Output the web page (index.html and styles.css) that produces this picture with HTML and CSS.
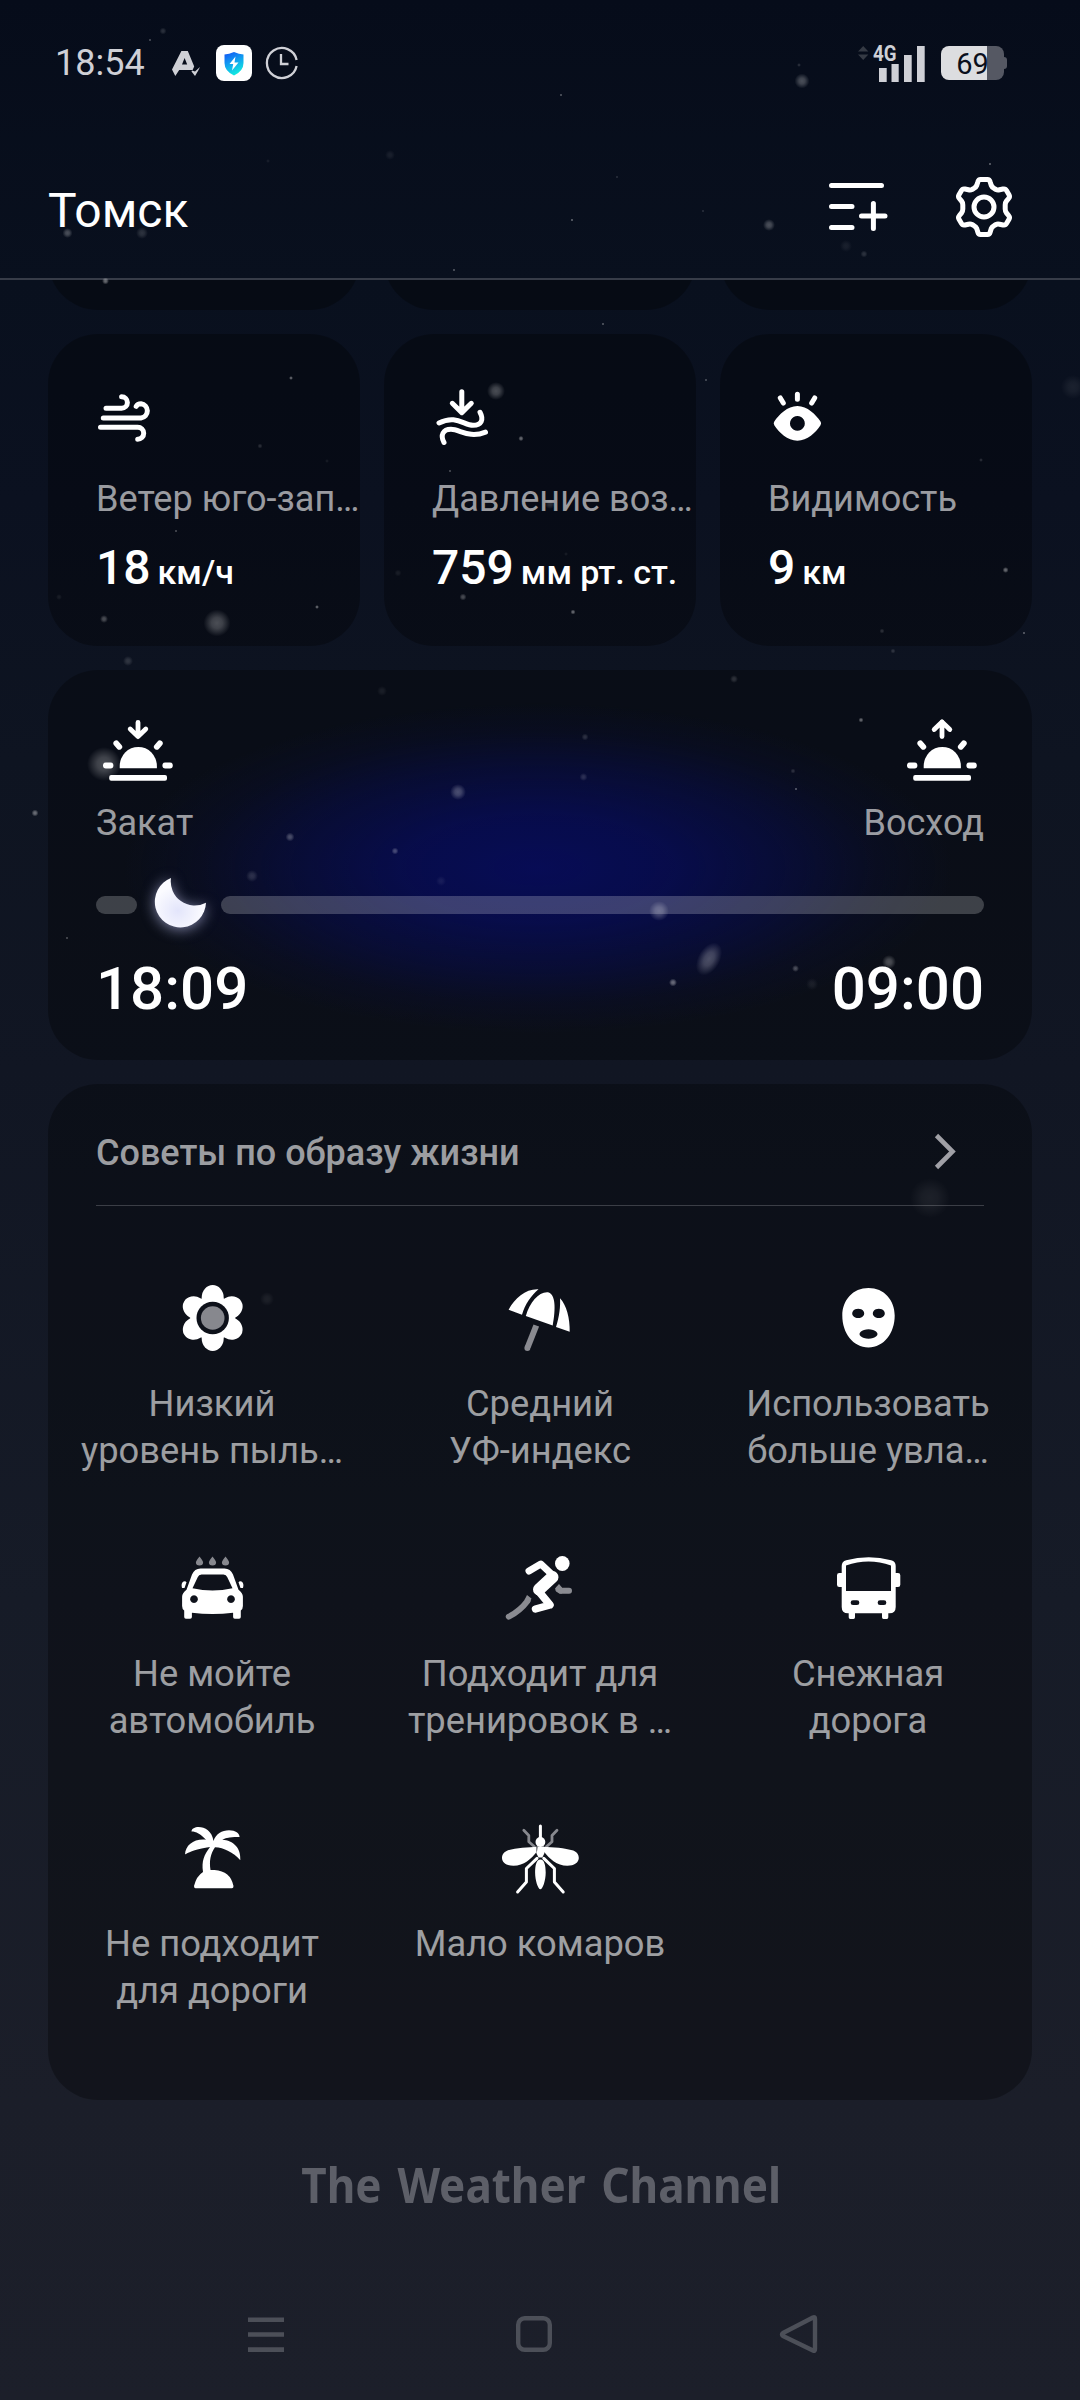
FILE: index.html
```html
<!DOCTYPE html>
<html lang="ru">
<head>
<meta charset="utf-8">
<title>Погода</title>
<link rel="stylesheet" href="styles.css">
</head>
<body>
<div class="screen">
  <header class="status">
    <span class="clock">18:54</span>
    <svg class="st-a" width="32" height="36" viewBox="0 0 32 36"><path fill="#cfd0d6" fill-rule="evenodd" d="M11.4 6h6.4l5.600 13.500.8 2-1.600 3.500H9.200L5.300 31 2 24.500zM14.600 13l-2.600 6.500h5.200z"/><path fill="#cfd0d6" d="M22 25.500l3 1 5-4.500-2 4-3 5-3.500-4.500z"/></svg>
    <span class="st-app"><svg width="36" height="36" viewBox="0 0 36 36"><defs><linearGradient id="sh" x1="0" y1="0" x2=".4" y2="1"><stop offset="0" stop-color="#1450f5"/><stop offset=".5" stop-color="#119cf0"/><stop offset="1" stop-color="#12e6e0"/></linearGradient></defs><path fill="url(#sh)" d="M8.500 9.500Q13 9 18 7q5 2 9.500 2.500V18q0 8-9.500 12.500Q8.500 26 8.500 18z"/><path fill="#fff" d="M19.500 11.500 13.500 19h3.700l-1.200 6.500 6.500-8h-4z"/></svg></span>
    <svg class="st-clock" width="34" height="34" viewBox="0 0 34 34" fill="none" stroke="#cfd0d6" stroke-width="2.300"><path d="M31.600 14A15 15 0 1 0 31.600 20"/><path d="M16 8v10h7.500"/></svg>
    <svg class="signal" width="70" height="38" viewBox="0 0 70 38" fill="#cfd0d6"><path fill="#353a44" d="M0 7.500 5.200 2l5.200 5.500zM0 10.500h10.400L5.200 16z"/><text x="15" y="16.500" font-size="21.500" font-weight="700" textLength="23.500" lengthAdjust="spacingAndGlyphs">4G</text><path d="M21 24h7.700v14H21zM33.500 20h7.200v18h-7.200zM46 11h7.700v27H46zM59 2h7.700v36H59z"/></svg>
    <span class="battery"><span>69</span></span>
  </header>

  <div class="topbar">
    <h1>Томск</h1>
    <svg class="add" width="64" height="60" viewBox="0 0 64 60" fill="none" stroke="#fff" stroke-width="5" stroke-linecap="round"><path d="M5.500 8.500h50M5.500 29.500h20.500M5.500 50.500h20.500M35.500 39h23.500M47.400 26.500v25"/></svg>
    <svg class="gear" width="60" height="64" viewBox="-30 -32 60 64" fill="none" stroke="#fff" stroke-width="5" stroke-linejoin="round"><circle r="10"/><path d="M-3.500 -27.500H3.500Q5.500 -27.500 6.200 -25L7.300 -21.500Q8 -19.700 10 -18.700L12 -17.500Q13.500 -16.700 15.500 -17.200L19 -18Q21.500 -18.500 22.500 -16.500L25 -12.300Q26.200 -10.200 24.500 -8.300L22.500 -6Q21.200 -4.500 21.200 -2V2Q21.200 4.500 22.500 6L24.500 8.300Q26.200 10.200 25 12.300L22.500 16.500Q21.500 18.500 19 18L15.500 17.200Q13.500 16.700 12 17.500L10 18.700Q8 19.700 7.300 21.500L6.200 25Q5.500 27.500 3.500 27.500H-3.500Q-5.500 27.500 -6.200 25L-7.300 21.500Q-8 19.700 -10 18.700L-12 17.500Q-13.500 16.700 -15.500 17.200L-19 18Q-21.500 18.500 -22.500 16.500L-25 12.300Q-26.200 10.200 -24.500 8.300L-22.500 6Q-21.200 4.500 -21.200 2V-2Q-21.200 -4.500 -22.500 -6L-24.500 -8.300Q-26.200 -10.200 -25 -12.300L-22.500 -16.500Q-21.500 -18.500 -19 -18L-15.500 -17.200Q-13.500 -16.700 -12 -17.500L-10 -18.700Q-8 -19.700 -7.300 -21.500L-6.200 -25Q-5.500 -27.500 -3.500 -27.500Z"/></svg>
  </div>

  <main class="content">
    <section class="metrics scrolled"><div class="card"></div><div class="card"></div><div class="card"></div></section>
    <section class="metrics">
      <article class="card metric">
        <svg width="60" height="72" viewBox="0 0 60 72" fill="none" stroke="#fff" stroke-width="5" stroke-linecap="round"><path d="M10 26.300H25.600a5.800 5.800 0 0 0 0-11.600M7.300 36H45a7.200 7.200 0 0 0 0-14.300q-3.500 0-4.800 2.600M4.500 45.300H41.700a6 6 0 0 1 0 12"/></svg>
        <p class="label">Ветер юго-зап…</p>
        <p class="value">18<small>км/ч</small></p>
      </article>
      <article class="card metric">
        <svg width="60" height="72" viewBox="0 0 60 72" fill="none" stroke="#fff" stroke-width="5" stroke-linecap="round" stroke-linejoin="round"><path d="M29.800 9.700V30M20.300 21.300l9.500 9.300 9.500-9.300M7 41C24 32.500 32 43.300 41 43.300c8.500 0 11-5.500 7-13M12 60.500C8 53 11 47.300 19 47.300c9 0 18 9.500 34.500 2.800"/></svg>
        <p class="label">Давление воз…</p>
        <p class="value">759<small>мм рт. ст.</small></p>
      </article>
      <article class="card metric">
        <svg width="60" height="72" viewBox="0 0 60 72"><path fill="#fff" fill-rule="evenodd" d="M6.300 39.500C11 32.500 19.500 24 29.400 24s18.400 8.500 23.100 15.500q1.200 1.800 0 3.700C47.800 50.200 39.300 58.700 29.400 58.700S11 50.200 6.300 43.200q-1.200-1.900 0-3.700zM29.400 34a7.400 7.400 0 1 0 .01 0z"/><path fill="none" stroke="#fff" stroke-width="5" stroke-linecap="round" d="M29.400 12.200v5M12.300 16l3 5M46.700 16l-3 5"/></svg>
        <p class="label">Видимость</p>
        <p class="value">9<small>км</small></p>
      </article>
    </section>

    <section class="card sun">
      <div class="sun-row">
        <div>
          <svg width="84" height="66" viewBox="0 0 84 66"><g fill="none" stroke="#fff" stroke-width="4.800" stroke-linecap="round" stroke-linejoin="round"><path d="M42 4.400V18M34.200 11l7.800 7.600 7.800-7.600"/><path stroke-width="5.800" d="M20.300 25.300l3 3.500M63.800 25.300l-3 3.500M9.900 47.500h4.600M69.300 47.500h4.600"/></g><path fill="#fff" d="M23.700 50.300V48a18.500 19 0 0 1 37.200 0v2.300z"/><rect fill="#fff" x="13.200" y="57" width="57.800" height="5.800" rx="2"/></svg>
          <p class="label">Закат</p>
        </div>
        <div class="end">
          <svg width="84" height="66" viewBox="0 0 84 66"><g fill="none" stroke="#fff" stroke-width="4.800" stroke-linecap="round" stroke-linejoin="round"><path d="M42 18.500V4M34.200 11.500l7.800-7.600 7.800 7.600"/><path stroke-width="5.800" d="M20.300 25.300l3 3.500M63.800 25.300l-3 3.500M9.900 47.500h4.600M69.300 47.500h4.600"/></g><path fill="#fff" d="M23.700 50.300V48a18.500 19 0 0 1 37.200 0v2.300z"/><rect fill="#fff" x="13.200" y="57" width="57.800" height="5.800" rx="2"/></svg>
          <p class="label">Восход</p>
        </div>
      </div>
      <div class="track">
        <i class="done"></i>
        <svg class="moon" width="84" height="62" viewBox="0 0 84 62"><defs><radialGradient id="mn" cx=".45" cy=".66" r=".5"><stop offset="0" stop-color="#e3e5fb"/><stop offset="1" stop-color="#fbfbff"/></radialGradient></defs><path fill="url(#mn)" d="M34 4A25.600 25.600 0 1 0 69 28.700A24 24 0 0 1 34 4Z"/></svg>
        <i class="rest"></i>
      </div>
      <div class="times"><span>18:09</span><span>09:00</span></div>
    </section>

    <section class="card tips">
      <div class="tips-head"><h2>Советы по образу жизни</h2><svg width="24" height="40" viewBox="0 0 24 40" fill="none" stroke="#a0a0a6" stroke-width="4.600"><path d="M2.500 3.500 18.500 19.500 2.500 35.500"/></svg></div>
      <div class="tips-grid">
        <div class="tip">
          <svg width="84" height="84" viewBox="0 0 84 84"><defs><mask id="core" maskUnits="userSpaceOnUse" x="0" y="0" width="84" height="84"><rect width="84" height="84" fill="#fff"/><circle cx="42.700" cy="42" r="16.200" fill="#000"/></mask></defs><g fill="#fff" mask="url(#core)"><circle cx="42.700" cy="42" r="22.500"/><ellipse cx="42.700" cy="21.500" rx="11" ry="12.500"/><ellipse cx="42.700" cy="62.500" rx="11" ry="12.500"/><ellipse cx="42.700" cy="21.500" rx="11" ry="12.500" transform="rotate(60 42.700 42)"/><ellipse cx="42.700" cy="21.500" rx="11" ry="12.500" transform="rotate(120 42.700 42)"/><ellipse cx="42.700" cy="21.500" rx="11" ry="12.500" transform="rotate(240 42.700 42)"/><ellipse cx="42.700" cy="21.500" rx="11" ry="12.500" transform="rotate(300 42.700 42)"/></g><circle cx="42.700" cy="42" r="11.800" fill="#87888e"/></svg>
          <p>Низкий<br>уровень пыль…</p>
        </div>
        <div class="tip">
          <svg width="84" height="84" viewBox="0 0 84 84"><path fill="#fff" d="M10.600 33.800C17 21.500 28 12.500 40.500 13.200 33 19.500 27 28.500 24 38.700zM27.800 40C32 26 41 15.500 50 16.300c7.500 1.500 8 16 4.700 33.300zM62 22.200C68.500 29 72 42 71.700 55.700L58 51C61.500 40 62.500 30 62 22.200z"/><path stroke="#8a8b91" stroke-width="6" d="M38.300 49.500 29.800 71"/><circle cx="29.400" cy="72" r="3" fill="#8a8b91"/></svg>
          <p>Средний<br>УФ-индекс</p>
        </div>
        <div class="tip">
          <svg width="84" height="84" viewBox="0 0 84 84"><path fill="#fff" fill-rule="evenodd" d="M42.500 12C58 12 68.700 24 68.700 39.500 68.700 57 58 71.400 42.500 71.400S16.300 57 16.300 39.500C16.300 24 27 12 42.500 12zM32.200 32.700a6 4.700 0 1 0 .01 0zM52.800 32.700a6 4.700 0 1 0 .01 0zM42.500 53.300a9 4.700 0 1 0 .01 0z"/></svg>
          <p>Использовать<br>больше увла…</p>
        </div>
        <div class="tip">
          <svg width="84" height="84" viewBox="0 0 84 84"><path fill="#87888e" d="M29.500 10.500q3.600 4.500 3.600 6a3.600 3 0 0 1-7.200 0q0-1.500 3.600-6zM42.500 10.500q3.600 4.500 3.600 6a3.600 3 0 0 1-7.200 0q0-1.500 3.600-6zM55.500 10.500q3.600 4.500 3.600 6a3.600 3 0 0 1-7.200 0q0-1.500 3.600-6z"/><path fill="#fff" fill-rule="evenodd" d="M30.500 22.400h24q6 0 8.500 6l5.500 15.300q4.400 3.300 4.400 7v9.300q0 3-2.100 4.500V71q0 1.700-1.700 1.700h-4.300q-1.700 0-1.700-1.700v-4.300q-20.600 2.600-41.200 0V71q0 1.700-1.700 1.700h-4.300q-1.700 0-1.700-1.700v-6.500q-2.100-1.500-2.100-4.500v-9.300q0-3.700 4.400-7L22 28.400q2.500-6 8.500-6zM31.500 28.500q-2.700 0-3.800 2.700l-5.200 11q20 4.800 40 0l-5.200-11q-1.100-2.700-3.800-2.700zM24 49.200a3.900 3.900 0 1 0 .01 0zM61 49.200a3.900 3.900 0 1 0 .01 0z"/><path fill="#fff" d="M16.500 36.200 14.500 42H12q-1.300-5 1.500-6.500 2-.7 3 .7zM68.500 36.200l2 5.800H73q1.300-5-1.500-6.500-2-.7-3 .7z"/></svg>
          <p>Не мойте<br>автомобиль</p>
        </div>
        <div class="tip">
          <svg width="84" height="84" viewBox="0 0 84 84" fill="none" stroke="#fff" stroke-linecap="round" stroke-linejoin="round"><ellipse cx="64.300" cy="17.500" rx="7.300" ry="7.500" fill="#fff" stroke="none"/><path stroke-width="7" d="M31 25 42.800 18 54 28.500"/><path stroke-width="12" d="M54.500 31 41 43.500"/><path stroke-width="7.500" d="M40.500 45 52 59 37.500 63"/><g stroke="#8a8b91" stroke-width="6"><path d="M29.500 55Q22 65 10.800 70.700"/><path d="M60.500 43.500l2.500 1.200h8"/></g><path fill="#8a8b91" stroke="none" d="M29 49l4.500 3.500-2 4.500-5-3zM61 38l-4 4.500 4 5h3v-6z"/></svg>
          <p>Подходит для<br>тренировок в …</p>
        </div>
        <div class="tip">
          <svg width="84" height="84" viewBox="0 0 84 84"><path fill="#fff" fill-rule="evenodd" d="M15.700 20q0-4.500 4.500-5.700Q42.700 8 65.200 14.300q4.500 1.200 4.500 5.700v7h2.300q2.300 0 2.300 2.300v9.400q0 2.300-2.300 2.300h-2.300v20q0 6.300-6.300 6.300h-1.100v4q0 1.700-1.500 1.700h-3.300q-1.500 0-1.500-1.700v-4H29v4q0 1.700-1.500 1.700h-3.300q-1.500 0-1.500-1.700v-4H22q-6.300 0-6.300-6.300V41h-2.400Q11 41 11 38.700v-9.400Q11 27 13.300 27h2.400zM20 19.500V45h45V19.500Q42.500 11.500 20 19.500zM27 54.300a2.350 2.350 0 0 0 0 4.700h4a2.350 2.350 0 0 0 0-4.700zM54 54.300a2.350 2.350 0 0 0 0 4.700h4a2.350 2.350 0 0 0 0-4.700z"/></svg>
          <p>Снежная<br>дорога</p>
        </div>
        <div class="tip">
          <svg width="84" height="84" viewBox="0 0 84 84" fill="#fff"><path d="M43.500 25C42 15 35 11 28.500 11c-3.500 0-7 1.500-7 4.500 4.500 0 9 2.500 14.500 8.200C24 22.500 15.500 29 15 38.500c4-2 8-5 25-7.500-6 8-8.500 14-7 25Q26.500 60 24 70q0 2.300 1.500 2.300h36.500q1.500 0 1.500-2.300-3-15-19-16H40.500C39 45 40.500 38 45 31.300c9 .5 18 5 25.300 12.900 1-12-7-20-18-20.500 4-2.300 10-2.700 17.300-2.700 0-3.500-4-6.800-10.600-6.800C52 14.200 45.500 18 43.500 25z"/></svg>
          <p>Не подходит<br>для дороги</p>
        </div>
        <div class="tip">
          <svg width="84" height="84" viewBox="0 0 84 84" fill="#fff"><g fill="none" stroke="#87888e" stroke-width="2.800" stroke-linecap="round" stroke-linejoin="round"><path d="M25.800 14.300l5 5.200v6.200l5.700 5M59 14.300l-5 5.200v6.200l-5.700 5"/></g><g fill="none" stroke="#fff" stroke-width="3" stroke-linecap="round" stroke-linejoin="round"><path d="M42.400 10v14M39 42.300 28.400 52.500V66l-8.800 10M45.800 42.300 56.400 52.500V66l8.800 10"/></g><circle cx="42.400" cy="26" r="4.900"/><path d="M38.500 30.500h7.800v7l-2 4h-3.800l-2-4zM42.400 43.500c4 0 5.300 6 5.300 13 0 8-3 16.800-5.300 16.800s-5.300-8.800-5.300-16.800c0-7 1.300-13 5.300-13zM39.500 31C30 31 18 32 9.500 34.500 5.500 36 4 39 4 42c0 4.500 4.500 7.700 11.500 7.700C26 49.700 33 43 39 35.500zM45.300 31c9.500 0 21.500 1 30 3.500 4 1.500 5.500 4.500 5.500 7.500 0 4.500-4.500 7.700-11.500 7.700C58.800 49.700 51.800 43 45.800 35.500z"/></svg>
          <p>Мало комаров</p>
        </div>
      </div>
    </section>
    <footer class="source"><span>The Weather Channel</span></footer>
  </main>

  <nav class="nav">
    <svg width="48" height="48" viewBox="0 0 48 48" fill="none" stroke="#4c4f58" stroke-width="4.600"><path d="M6 9.700h36M6 24.500h36M6 39.600h36"/></svg>
    <svg class="home" width="48" height="48" viewBox="0 0 48 48" fill="none" stroke="#4c4f58" stroke-width="4.400"><rect x="8.200" y="8.200" width="31.600" height="31.600" rx="6.500"/></svg>
    <svg width="48" height="48" viewBox="0 0 48 48" fill="none" stroke="#4c4f58" stroke-width="4.400" stroke-linejoin="round"><path d="M39 7.500Q41 6.500 41 9V39Q41 41.500 39 40.500L9 26Q7 24.500 9 23Z"/></svg>
  </nav>

  <svg class="snow" width="1080" height="2400" viewBox="0 0 1080 2400" fill="url(#flake)">
    <defs><radialGradient id="flake"><stop offset="0" stop-color="#fff"/><stop offset=".4" stop-color="#fff" stop-opacity=".8"/><stop offset="1" stop-color="#fff" stop-opacity="0"/></radialGradient></defs>
    <g opacity=".07"><circle cx="390" cy="155" r="5"/><circle cx="268" cy="161" r="2"/><circle cx="846" cy="246" r="6"/><circle cx="327" cy="461" r="2"/><circle cx="398" cy="573" r="3.500"/><circle cx="1073" cy="387" r="12"/><circle cx="382" cy="691" r="5"/><circle cx="441" cy="881" r="5"/><circle cx="812" cy="984" r="6"/><circle cx="267" cy="1299" r="7"/><circle cx="930" cy="1198" r="20"/><circle cx="566" cy="554" r="2"/><circle cx="59" cy="597" r="3"/></g>
    <g opacity=".15"><circle cx="163" cy="31" r="3.500"/><circle cx="799" cy="65" r="2"/><circle cx="617" cy="177" r="1.500"/><circle cx="703" cy="211" r="1.500"/><circle cx="864" cy="254" r="3.500"/><circle cx="142" cy="233" r="6"/><circle cx="260" cy="446" r="2.500"/><circle cx="981" cy="460" r="2"/><circle cx="550" cy="504" r="5"/><circle cx="882" cy="631" r="2.500"/><circle cx="893" cy="651" r="2.500"/><circle cx="128" cy="661" r="5"/><circle cx="252" cy="876" r="6"/><circle cx="793" cy="771" r="2.500"/><circle cx="734" cy="679" r="4"/><circle cx="585" cy="737" r="3.500"/><circle cx="583.500" cy="777" r="4"/></g>
    <g opacity=".27"><circle cx="67.500" cy="233" r="5"/><circle cx="802" cy="81" r="7.500"/><circle cx="769" cy="225" r="6"/><circle cx="496" cy="391" r="9"/><circle cx="217" cy="623" r="13.500"/><circle cx="104" cy="764" r="17"/><circle cx="458" cy="792" r="8"/><circle cx="290" cy="837" r="4.500"/><circle cx="395" cy="851" r="3.500"/><circle cx="659" cy="911" r="10"/><circle cx="889" cy="962" r="7"/><circle cx="795.500" cy="968.500" r="3.500"/><ellipse cx="709" cy="959" rx="11" ry="18" transform="rotate(30 709 959)"/><circle cx="104" cy="619" r="4"/><circle cx="463" cy="597" r="3.500"/></g>
    <g opacity=".4"><circle cx="105.500" cy="281" r="3.500"/><circle cx="150" cy="40" r="1.200"/><circle cx="454" cy="270" r="1.300"/><circle cx="561" cy="95" r="1.300"/><circle cx="572" cy="220" r="1.500"/><circle cx="990" cy="164" r="1.500"/><circle cx="603" cy="324" r="1.300"/><circle cx="291" cy="378" r="2"/><circle cx="521" cy="438.500" r="2.700"/><circle cx="450" cy="471" r="1.200"/><circle cx="176" cy="531" r="1.200"/><circle cx="317" cy="607" r="2"/><circle cx="706" cy="380" r="1.200"/><circle cx="1005.600" cy="570" r="3"/><circle cx="573" cy="612" r="2.500"/><circle cx="1024" cy="633" r="1.400"/><circle cx="35" cy="813" r="3.500"/><circle cx="67" cy="938" r="1.200"/><circle cx="861" cy="720" r="2.500"/><circle cx="796" cy="789" r="1.400"/><circle cx="673" cy="982.500" r="4"/></g>
  </svg>
</div>
</body>
</html>
```
FILE: styles.css
```css
* { box-sizing: border-box; margin: 0; padding: 0; }
body { font-family: Roboto, "Liberation Sans", sans-serif; color: #fff; background: #060c19; }
svg { display: block; flex: none; }

.screen {
  position: relative;
  width: 1080px;
  height: 2400px;
  overflow: hidden;
  display: flex;
  flex-direction: column;
  background: linear-gradient(180deg, #060c1a 0, #09101e 280px, #0b1120 500px, #0e1421 760px, #111623 1070px, #161b27 1600px, #1b1e29 2100px, #1c1f2a 2400px);
}

.status { height: 128px; padding: 0 73px 2px 55px; display: flex; align-items: center; }
.clock { width: 91px; font-size: 36px; line-height: 42px; color: #cfd0d6; }
.st-a { margin-left: 24px; }
.st-app { margin-left: 14px; width: 36px; height: 36px; border-radius: 8px; background: #fff; overflow: hidden; }
.st-clock { margin-left: 13px; }
.signal { margin-left: auto; overflow: visible; }
.battery {
  position: relative;
  width: 63px;
  height: 34px;
  margin: 0 3px 0 13px;
  border-radius: 8px;
  background: linear-gradient(90deg, #dcdde0 46px, #555863 46px);
  color: #0a0f1c;
  font-size: 29px;
  line-height: 36px;
  text-align: center;
}
.battery::after {
  content: "";
  position: absolute;
  left: 63px;
  top: 11px;
  width: 3px;
  height: 12px;
  border-radius: 0 3px 3px 0;
  background: #555863;
}

.topbar { height: 152px; border-bottom: 2px solid #373c48; padding: 8px 66px 0 48px; display: flex; align-items: center; }
.topbar h1 { flex: 1; padding-top: 8px; font-size: 48px; line-height: 58px; font-weight: 400; }
.add { margin-right: 64px; }

.content { flex: none; height: 1980px; overflow: hidden; padding: 0 48px; display: flex; flex-direction: column; gap: 24px; }
.card { border-radius: 50px; background: rgba(0, 0, 0, .3); }
.metrics { display: grid; grid-template-columns: repeat(3, 312px); gap: 24px; flex: none; height: 312px; }
.scrolled { margin-top: -282px; }
.metric { padding: 48px 0 0 48px; }
.label { font-size: 36.100px; line-height: 42px; color: rgba(255, 255, 255, .6); white-space: nowrap; }
.metric .label { margin: 24px 0 20px; }
.value { font-size: 48px; line-height: 56px; font-weight: 500; white-space: nowrap; }
.value small { font-size: 34px; margin-left: 7px; }

.sun {
  flex: none;
  height: 390px;
  padding: 48px;
  background:
    radial-gradient(ellipse 415px 165px at 490px 198px, rgba(7, 12, 92, .9) 0, rgba(7, 12, 88, .8) 32%, rgba(7, 12, 80, .5) 62%, rgba(7, 11, 70, .2) 82%, rgba(7, 10, 60, 0) 100%),
    rgba(0, 0, 0, .3);
}
.sun-row { display: flex; justify-content: space-between; }
.sun-row .label { margin-top: 18px; }
.end { display: flex; flex-direction: column; align-items: flex-end; }
.track { display: flex; align-items: center; margin-top: 30px; height: 62px; }
.track i { height: 18px; border-radius: 9px; background: rgba(255, 255, 255, .21); }
.done { width: 41px; }
.rest { flex: 1; }
.moon { overflow: visible; filter: drop-shadow(0 2px 7px rgba(205, 208, 255, .6)); }
.times { display: flex; justify-content: space-between; margin-top: 18px; font-size: 60px; line-height: 70px; font-weight: 500; }

.tips { flex: none; height: 1016px; padding-top: 48px; }
.tips-head { margin: 0 48px; height: 74px; padding-right: 26px; border-bottom: 1px solid #3b3e46; display: flex; justify-content: space-between; }
.tips-head h2 { font-size: 36px; line-height: 42px; font-weight: 500; color: rgba(255, 255, 255, .6); }
.tips-grid { margin-top: 70px; display: grid; grid-template-columns: repeat(3, 328px); row-gap: 72px; }
.tip { height: 198px; display: flex; flex-direction: column; align-items: center; gap: 20px; }
.tip p { font-size: 36.300px; line-height: 47px; text-align: center; color: rgba(255, 255, 255, .6); white-space: nowrap; }

.source { display: flex; justify-content: center; margin-top: 25px; padding-left: 2px; }
.source span { font-family: "Noto Sans", sans-serif; font-weight: 700; font-size: 49px; line-height: 70px; word-spacing: 5px; color: #5d5f68; white-space: nowrap; transform: scaleX(.898); }

.nav { height: 140px; padding: 50px 258px 0 242px; display: flex; justify-content: space-between; }
.home { margin-left: 4px; }
.snow { position: absolute; left: 0; top: 0; pointer-events: none; }
```
